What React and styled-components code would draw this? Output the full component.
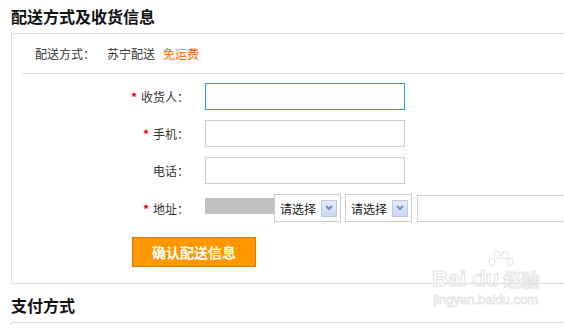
import styled, { createGlobalStyle } from "styled-components";

const GlobalStyle = createGlobalStyle`
  html, body {
    margin: 0;
    padding: 0;
    background: #ffffff;
    overflow: hidden;
  }
  body {
    font-family: "Noto Sans CJK SC", "Liberation Sans", sans-serif;
    font-size: 12px;
    color: #333;
  }
`;

const Page = styled.div`
  position: relative;
  padding-left: 11px;
  width: 564px;
  height: 325px;
  box-sizing: border-box;
  overflow: hidden;
`;

const Title = styled.h2`
  margin: 0;
  height: 33px;
  line-height: 33px;
  font-size: 16px;
  font-weight: bold;
  color: #111;
  margin-top: ${(p) => p.$gap || 0}px;
`;

const Box = styled.div`
  width: 600px;
  border: 1px solid #ddd;
  border-right: none;
  padding: 0 0 ${(p) => (p.$empty ? 0 : 16)}px 10px;
  min-height: ${(p) => (p.$empty ? 20 : 0)}px;
`;

const ShipRow = styled.div`
  display: flex;
  align-items: center;
  height: 39px;
  padding-left: 13px;
  border-bottom: 1px solid #ddd;
`;

const ShipLabel = styled.span`
  width: 72px;
  color: #333;
`;

const ShipName = styled.span`
  color: #333;
  margin-right: 8px;
`;

const Free = styled.span`
  color: #f60;
`;

const Form = styled.div`
  display: grid;
  grid-template-columns: 167px 1fr;
  column-gap: 16px;
  row-gap: 10px;
  padding-top: 9px;
  align-items: center;
`;

const Label = styled.label`
  text-align: right;
  color: #333;
  font-size: 12px;
  white-space: nowrap;
`;

const Star = styled.span`
  color: #e00;
  font-weight: bold;
  margin-right: 4px;
`;

const TextInput = styled.div`
  box-sizing: border-box;
  flex-shrink: 0;
  width: ${(p) => p.$width || 200}px;
  height: 27px;
  border: 1px solid ${(p) => (p.$focus ? "#1ea2ea" : "#ccc")};
  background: #fff;
`;

const AddressRow = styled.div`
  display: flex;
  align-items: center;
  height: 28px;
`;

const Region = styled.div`
  flex-shrink: 0;
  width: 70px;
  height: 16px;
  background: #c0c0c0;
  margin-top: -4px;
  margin-right: -1px;
`;

const Select = styled.div`
  box-sizing: border-box;
  flex-shrink: 0;
  display: flex;
  align-items: center;
  justify-content: space-between;
  width: 67px;
  height: 28px;
  padding: 0 3px 0 5px;
  border: 1px solid #ccc;
  background: #fff;
  margin-right: ${(p) => p.$mr || 0}px;
  color: #222;
  font-size: 12px;
`;

const Arrow = styled.span`
  display: flex;
  align-items: center;
  justify-content: center;
  width: 16px;
  height: 17px;
  box-sizing: border-box;
  background: linear-gradient(#e4ecfd, #c9d8f8);
  border: 1px solid #b7c9f0;
`;

const ButtonRow = styled.div`
  grid-column: 1 / span 2;
  padding-left: 110px;
  padding-top: 5px;
`;

const Confirm = styled.button`
  box-sizing: border-box;
  width: 124px;
  height: 30px;
  background: #fe9700;
  border: 1px solid #e0780a;
  color: #fff;
  font-family: "Noto Sans CJK SC", sans-serif;
  font-size: 14px;
  font-weight: bold;
  padding: 0;
`;

const Watermark = styled.div`
  position: absolute;
  left: 432px;
  top: 250px;
  display: flex;
  flex-direction: column;
  align-items: center;
  pointer-events: none;
`;

const MarkTop = styled.div`
  display: flex;
  align-items: flex-end;
  font-family: "Liberation Sans", sans-serif;
  font-weight: bold;
  font-size: 22px;
  line-height: 22px;
  color: transparent;
  -webkit-text-stroke: 1px #e2e2e2;
`;

const MarkCn = styled.span`
  font-family: "Noto Sans CJK SC", sans-serif;
  font-size: 18px;
  margin-left: 4px;
`;

const MarkUrl = styled.div`
  font-family: "Liberation Sans", sans-serif;
  font-size: 13px;
  color: transparent;
  -webkit-text-stroke: 0.8px #e4e4e4;
  margin-top: 2px;
`;

const Chevron = () => (
  <svg width="8" height="6" viewBox="0 0 8 6">
    <path d="M1 1 L4 4 L7 1" fill="none" stroke="#7b88a6" strokeWidth="2" />
  </svg>
);

const Paw = () => (
  <svg width="30" height="24" viewBox="0 0 30 24" style={{ marginBottom: -6, marginLeft: 30 }}>
    <g fill="none" stroke="#e2e2e2" strokeWidth="1">
      <ellipse cx="6" cy="12" rx="3" ry="4" />
      <ellipse cx="11" cy="5" rx="3" ry="4" />
      <ellipse cx="19" cy="5" rx="3" ry="4" />
      <ellipse cx="24" cy="12" rx="3" ry="4" />
    </g>
  </svg>
);

const App = () => {
  return (
    <Page>
      <GlobalStyle />
      <Title>配送方式及收货信息</Title>
      <Box>
        <ShipRow>
          <ShipLabel>配送方式：</ShipLabel>
          <ShipName>苏宁配送</ShipName>
          <Free>免运费</Free>
        </ShipRow>
        <Form>
          <Label>
            <Star>*</Star>收货人：
          </Label>
          <TextInput $focus />
          <Label>
            <Star>*</Star>手机：
          </Label>
          <TextInput />
          <Label>电话：</Label>
          <TextInput />
          <Label>
            <Star>*</Star>地址：
          </Label>
          <AddressRow>
            <Region />
            <Select $mr={4}>
              请选择
              <Arrow>
                <Chevron />
              </Arrow>
            </Select>
            <Select $mr={5}>
              请选择
              <Arrow>
                <Chevron />
              </Arrow>
            </Select>
            <TextInput $width={200} />
          </AddressRow>
          <ButtonRow>
            <Confirm>确认配送信息</Confirm>
          </ButtonRow>
        </Form>
      </Box>
      <Title $gap={5}>支付方式</Title>
      <Box $empty />
      <Watermark>
        <Paw />
        <MarkTop>
          Bai du<MarkCn>经验</MarkCn>
        </MarkTop>
        <MarkUrl>jingyan.baidu.com</MarkUrl>
      </Watermark>
    </Page>
  );
};

export default App;
